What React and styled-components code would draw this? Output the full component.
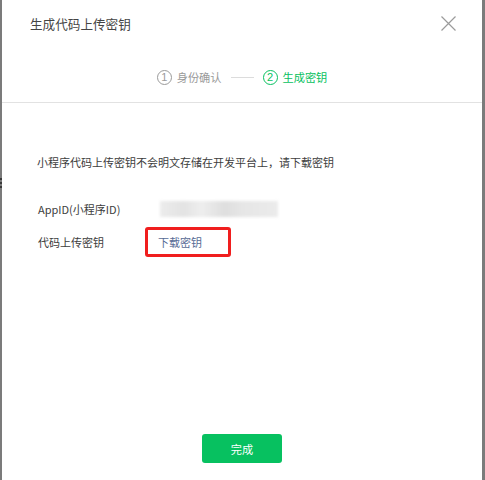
import React from 'react';
import styled, { createGlobalStyle } from 'styled-components';

const GlobalStyle = createGlobalStyle`
  body {
    margin: 0;
    background: #7b7b7b;
    font-family: "Noto Sans CJK SC", "Noto Sans", "Liberation Sans", sans-serif;
  }
`;

const Page = styled.div`
  display: flex;
  height: 480px;
  width: 485px;
  overflow: hidden;
`;

const Strip = styled.div`
  width: ${p => p.w}px;
  flex-shrink: 0;
  background: #7b7b7b;
  display: flex;
  flex-direction: column;
  gap: 2px;
  padding-top: 178px;
  box-sizing: border-box;
`;

const Mark = styled.span`
  display: block;
  height: 2px;
  background: #3a3a3a;
`;

const Modal = styled.div`
  flex: 1;
  background: #fff;
  display: flex;
  flex-direction: column;
`;

const Header = styled.div`
  height: 46px;
  display: flex;
  align-items: center;
  justify-content: space-between;
  padding: 0 26px 0 28px;
`;

const Title = styled.h1`
  margin: 0;
  font-size: 12.6px;
  font-weight: 400;
  color: #444;
`;

const Close = styled.button`
  border: 0;
  background: none;
  padding: 0;
  width: 15px;
  height: 15px;
  display: flex;
`;

const Steps = styled.div`
  display: flex;
  align-items: center;
  justify-content: center;
  height: 20px;
  margin: 21px 0 15px;
`;

const Step = styled.div`
  display: flex;
  align-items: center;
  gap: 5px;
  font-size: 11.2px;
  color: ${p => (p.active ? '#07c160' : '#9a9a9a')};
`;

const Num = styled.span`
  width: 13px;
  height: 13px;
  border: 1px solid currentColor;
  border-radius: 50%;
  display: flex;
  align-items: center;
  justify-content: center;
  font-size: 11px;
  line-height: 1;
  font-family: "Liberation Sans", sans-serif;
`;

const Line = styled.span`
  width: 23px;
  height: 1px;
  background: #dcdcdc;
  margin: 0 9px;
`;

const Divider = styled.div`
  height: 1px;
  background: #e2e2e2;
`;

const Body = styled.div`
  flex: 1;
  padding: 49px 35px 0;
  font-size: 11px;
  color: #3d3d3d;
`;

const Desc = styled.p`
  margin: 0;
  line-height: 20px;
`;

const Row = styled.div`
  display: grid;
  grid-template-columns: 121px 1fr;
  align-items: center;
  min-height: 20px;
  margin-top: ${p => p.gap}px;
`;

const Label = styled.span`
  padding-left: 1px;
  line-height: 20px;
`;

const Blurred = styled.div`
  margin-left: 2px;
  width: 118px;
  height: 16px;
  background: linear-gradient(90deg, #ececec 0%, #e3e3e3 20%, #eeeeee 35%, #dedede 55%, #e6e6e6 70%, #ebebeb 100%);
  filter: blur(1.5px);
`;

const Highlight = styled.span`
  justify-self: start;
  margin-left: -13px;
  border: 3px solid #f01e1e;
  border-radius: 3px;
  padding: 4px 26px 4px 10px;
  line-height: 16px;
`;

const Link = styled.a`
  color: #576b95;
  text-decoration: none;
`;

const Footer = styled.div`
  display: flex;
  justify-content: center;
  padding-bottom: 17px;
`;

const Button = styled.button`
  width: 80px;
  height: 29px;
  border: 0;
  border-radius: 3px;
  background: #07c160;
  color: #fff;
  font-family: inherit;
  font-size: 11.2px;
`;

export default function App() {
  return (
    <>
      <GlobalStyle />
      <Page>
        <Strip w={2}>
          <Mark />
          <Mark />
          <Mark />
        </Strip>
        <Modal>
          <Header>
            <Title>生成代码上传密钥</Title>
            <Close aria-label="close">
              <svg width="15" height="15" viewBox="0 0 15 15">
                <path d="M0.5 0.5 L14.5 14.5 M14.5 0.5 L0.5 14.5" stroke="#9b9b9b" strokeWidth="1.2" fill="none" />
              </svg>
            </Close>
          </Header>
          <Steps>
            <Step>
              <Num>1</Num>
              身份确认
            </Step>
            <Line />
            <Step active>
              <Num>2</Num>
              生成密钥
            </Step>
          </Steps>
          <Divider />
          <Body>
            <Desc>小程序代码上传密钥不会明文存储在开发平台上，请下载密钥</Desc>
            <Row gap={27}>
              <Label>AppID(小程序ID)</Label>
              <Blurred />
            </Row>
            <Row gap={8}>
              <Label>代码上传密钥</Label>
              <Highlight>
                <Link href="#">下载密钥</Link>
              </Highlight>
            </Row>
          </Body>
          <Footer>
            <Button>完成</Button>
          </Footer>
        </Modal>
        <Strip w={3} />
      </Page>
    </>
  );
}
